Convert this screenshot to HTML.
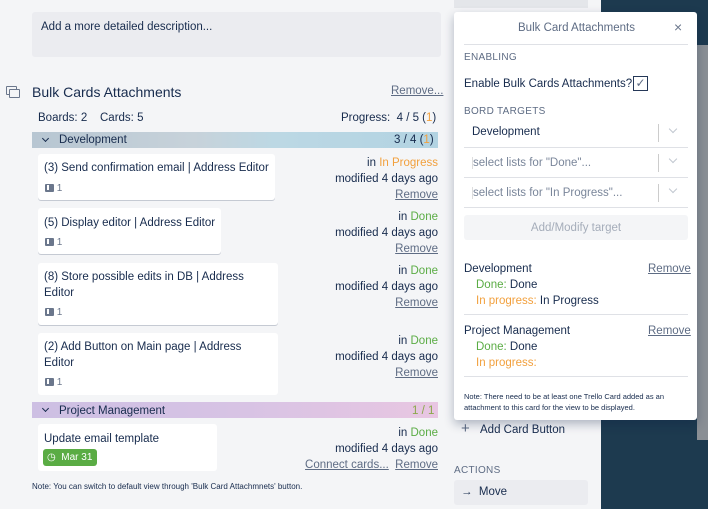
<!DOCTYPE html>
<html><head><meta charset="utf-8"><style>
*{margin:0;padding:0;box-sizing:border-box}
body{width:708px;height:509px;overflow:hidden;background:#f4f5f7;font-family:"Liberation Sans",sans-serif;color:#172b4d;font-size:11.5px;position:relative}
.a{position:absolute;white-space:nowrap}
.card{position:absolute;background:#fff;border-radius:3px;box-shadow:0 1px 0 #c5cad3}
.r{text-align:right;right:270px}
u{color:#5e6c84}
.g{color:#5aac44}.o{color:#f2a03d}
.ic{display:inline-block;width:9px;height:8px;background:#6b778c;border-radius:1px;vertical-align:-1px;position:relative}
.ic:after{content:"";position:absolute;left:2px;top:1px;width:2px;height:5px;background:#fff}
.chev{position:absolute;width:5px;height:5px;border-right:1.5px solid #172b4d;border-bottom:1.5px solid #172b4d;transform:rotate(45deg)}
.sel{position:absolute;left:464px;width:224px;height:30px;border-bottom:1px solid #dfe1e6}
.sel .t{position:absolute;left:8px;top:9px;border-left:1px solid #ddd}
.sel .d{position:absolute;left:194px;top:6px;width:1px;height:18px;background:#ccc}
.sel .v{position:absolute;left:206px;top:8px;width:6px;height:6px;border-right:1.3px solid #c1c7d0;border-bottom:1.3px solid #c1c7d0;transform:rotate(45deg)}
</style></head><body>
<div class="a" style="left:601px;top:0;width:107px;height:509px;background:#1d3a4f"></div>
<div class="a" style="left:697px;top:45px;width:11px;height:395px;background:#8a8f95"></div>
<div class="a" style="left:454px;top:0;width:134px;height:8px;background:#e4e6ea"></div>
<div class="a" style="left:32px;top:12px;width:409px;height:45px;background:#ebecf0;border-radius:3px"></div>
<div class="a" style="left:41px;top:21px">Add a more detailed description...</div>
<div class="a" style="left:6px;top:86px;width:11px;height:9px;border:1.3px solid #6b778c;border-radius:1px"></div>
<div class="a" style="left:9px;top:89px;width:11px;height:9px;border:1.3px solid #6b778c;border-radius:1px;background:#f4f5f7"></div>
<div class="a" style="left:32px;top:84px;font-size:14px">Bulk Cards Attachments</div>
<div class="a" style="left:391px;top:85px"><u>Remove...</u></div>
<div class="a" style="left:38px;top:112px">Boards: 2 &nbsp;&nbsp;&nbsp;Cards: 5</div>
<div class="a" style="left:341px;top:112px">Progress: &nbsp;4 / 5 (<span class="o">1</span>)</div>
<div class="a" style="left:32px;top:132px;width:406px;height:16px;background:linear-gradient(90deg,#b7c6d2 0%,#c7d2da 40%,#bcd8e4 60%,#b2d3e2 100%)"></div>
<div class="chev" style="left:43px;top:136px"></div>
<div class="a" style="left:59px;top:134px">Development</div>
<div class="a" style="left:394px;top:134px">3 / 4 (<span class="o">1</span>)</div>

<div class="card" style="left:38px;top:154px;width:237px;height:46px"></div>
<div class="a" style="left:44px;top:162px">(3) Send confirmation email | Address Editor</div>
<div class="a" style="left:45px;top:183px;color:#6b778c;font-size:10px"><span class="ic"></span> 1</div>
<div class="a r" style="top:157px">in <span class="o">In Progress</span></div>
<div class="a r" style="top:173px">modified 4 days ago</div>
<div class="a r" style="top:189px"><u>Remove</u></div>

<div class="card" style="left:38px;top:208px;width:183px;height:46px"></div>
<div class="a" style="left:44px;top:217px">(5) Display editor | Address Editor</div>
<div class="a" style="left:45px;top:237px;color:#6b778c;font-size:10px"><span class="ic"></span> 1</div>
<div class="a r" style="top:211px">in <span class="g">Done</span></div>
<div class="a r" style="top:227px">modified 4 days ago</div>
<div class="a r" style="top:243px"><u>Remove</u></div>

<div class="card" style="left:38px;top:263px;width:240px;height:62px"></div>
<div class="a" style="left:44px;top:271px">(8) Store possible edits in DB | Address</div>
<div class="a" style="left:44px;top:287px">Editor</div>
<div class="a" style="left:45px;top:307px;color:#6b778c;font-size:10px"><span class="ic"></span> 1</div>
<div class="a r" style="top:265px">in <span class="g">Done</span></div>
<div class="a r" style="top:281px">modified 4 days ago</div>
<div class="a r" style="top:297px"><u>Remove</u></div>

<div class="card" style="left:38px;top:333px;width:240px;height:62px;box-shadow:none"></div>
<div class="a" style="left:44px;top:341px">(2) Add Button on Main page | Address</div>
<div class="a" style="left:44px;top:357px">Editor</div>
<div class="a" style="left:45px;top:377px;color:#6b778c;font-size:10px"><span class="ic"></span> 1</div>
<div class="a r" style="top:335px">in <span class="g">Done</span></div>
<div class="a r" style="top:351px">modified 4 days ago</div>
<div class="a r" style="top:367px"><u>Remove</u></div>

<div class="a" style="left:32px;top:402px;width:406px;height:16px;background:linear-gradient(90deg,#cdbfe3,#d7c3e4 50%,#e8c6e2)"></div>
<div class="chev" style="left:43px;top:406px"></div>
<div class="a" style="left:59px;top:405px">Project Management</div>
<div class="a" style="left:412px;top:405px;color:#8aa84a">1 / 1</div>
<div class="card" style="left:38px;top:424px;width:179px;height:47px;box-shadow:none"></div>
<div class="a" style="left:44px;top:433px">Update email template</div>
<div class="a" style="left:43px;top:449px;width:54px;height:17px;background:#5aac44;border-radius:3px;color:#fff;font-size:10px;padding:3px 0 0 4px">&#9719; &nbsp;Mar 31</div>
<div class="a r" style="top:427px">in <span class="g">Done</span></div>
<div class="a r" style="top:443px">modified 4 days ago</div>
<div class="a r" style="top:459px"><u>Connect cards...</u> &nbsp;<u>Remove</u></div>
<div class="a" style="left:32px;top:482px;font-size:8px">Note: You can switch to default view through 'Bulk Card Attachmnets' button.</div>

<div class="a" style="left:461px;top:420px;font-size:15px;color:#5e6c84">+</div>
<div class="a" style="left:480px;top:424px">Add Card Button</div>
<div class="a" style="left:454px;top:465px;font-size:10px;color:#5e6c84;letter-spacing:.3px">ACTIONS</div>
<div class="a" style="left:454px;top:480px;width:134px;height:25px;background:#ebecf0;border-radius:3px"></div>
<div class="a" style="left:461px;top:486px">&rarr; &nbsp;Move</div>

<div class="a" style="left:454px;top:12px;width:243px;height:408px;background:#fff;border-radius:3px;box-shadow:0 4px 10px rgba(9,30,66,.3)"></div>
<div class="a" style="left:518px;top:22px;color:#5e6c84">Bulk Card Attachments</div>
<div class="a" style="left:674px;top:19px;font-size:14px;color:#6b778c">&times;</div>
<div class="a" style="left:464px;top:44px;width:224px;height:1px;background:#dfe1e6"></div>
<div class="a" style="left:464px;top:52px;font-size:10px;color:#5e6c84;letter-spacing:.3px">ENABLING</div>
<div class="a" style="left:464px;top:78px">Enable Bulk Cards Attachments?</div>
<div class="a" style="left:633px;top:76px;width:15px;height:15px;border:1.5px solid #253858;font-size:12px;line-height:12px;text-align:center;color:#5e6c84">&#10003;</div>
<div class="a" style="left:464px;top:106px;font-size:10px;color:#5e6c84;letter-spacing:.3px">BORD TARGETS</div>
<div class="sel" style="top:118px"><span class="t a" style="top:8px;border:none">Development</span><span class="d"></span><span class="v"></span></div>
<div class="sel" style="top:148px"><span class="t a" style="color:#7a869a">select lists for "Done"...</span><span class="d"></span><span class="v"></span></div>
<div class="sel" style="top:178px"><span class="t a" style="color:#7a869a">select lists for "In Progress"...</span><span class="d"></span><span class="v"></span></div>
<div class="a" style="left:464px;top:215px;width:224px;height:25px;background:#f4f5f7;border-radius:3px;color:#a5adba;text-align:center;padding-top:7px">Add/Modify target</div>
<div class="a" style="left:464px;top:263px">Development</div>
<div class="a" style="left:648px;top:263px"><u>Remove</u></div>
<div class="a" style="left:476px;top:279px"><span class="g">Done:</span> Done</div>
<div class="a" style="left:476px;top:295px"><span class="o">In progress:</span> In Progress</div>
<div class="a" style="left:464px;top:314px;width:224px;height:1px;background:#dfe1e6"></div>
<div class="a" style="left:464px;top:325px">Project Management</div>
<div class="a" style="left:648px;top:325px"><u>Remove</u></div>
<div class="a" style="left:476px;top:341px"><span class="g">Done:</span> Done</div>
<div class="a" style="left:476px;top:357px"><span class="o">In progress:</span></div>
<div class="a" style="left:464px;top:376px;width:224px;height:1px;background:#dfe1e6"></div>
<div class="a" style="left:464px;top:391px;font-size:7.5px;line-height:11px;white-space:normal;width:230px">Note: There need to be at least one Trello Card added as an attachment to this card for the view to be displayed.</div>
</body></html>
